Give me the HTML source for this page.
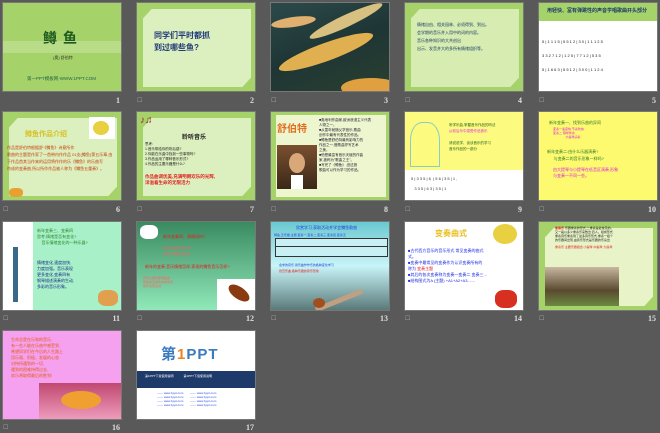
<!DOCTYPE html>
<html><head><meta charset="utf-8"><style>
*{margin:0;padding:0;box-sizing:border-box}
body{width:660px;height:433px;background:#595959;position:relative;overflow:hidden;font-family:"Liberation Sans","Noto Sans CJK SC",sans-serif}
.s{position:absolute;width:120px;height:90px;overflow:hidden;border:1px solid #777}
.n{position:absolute;color:#ddd;font-size:8px;font-family:"Liberation Serif",serif;font-weight:bold;text-align:right;width:30px}
.ic{position:absolute;color:#aaa;font-size:6px}
.g{background:#a6d26a}
.in{position:absolute;left:6px;top:6px;width:108px;height:78px;background:#d6ecb0;clip-path:polygon(8% 0,100% 0,100% 88%,92% 100%,0 100%,0 12%)}
.t{position:absolute;font-size:4px;line-height:6px;color:#333}
</style></head><body>

<!-- row 1 -->
<div class="s g" style="left:2px;top:2px">
 <div style="position:absolute;left:0;top:38px;width:120px;height:12px;background:#b8dc88"></div>
 <div style="position:absolute;left:0;top:25px;width:120px;text-align:center;font-size:14px;font-weight:bold;color:#1f5a1f;letter-spacing:6px">鳟鱼</div>
 <div class="t" style="left:50px;top:52px">(奥) 舒伯特</div>
 <div style="position:absolute;left:24px;top:73px;font-size:4.5px;color:#264">第一PPT模板网-WWW.1PPT.COM</div>
</div>
<div class="s g" style="left:136px;top:2px"><div class="in" style="background:#dcefbe"></div>
 <div style="position:absolute;left:17px;top:27px;font-size:8px;font-weight:bold;color:#1e3a78;line-height:12px">同学们平时都抓<br>到过哪些鱼?</div></div>
<div class="s" style="left:270px;top:2px;background:linear-gradient(160deg,#2c4a4a,#1e3535 50%,#2a4030)">
 <div style="position:absolute;left:5px;top:40px;width:100px;height:18px;background:#e0b050;border-radius:50%;transform:rotate(-20deg)"></div>
 <div style="position:absolute;left:35px;top:12px;width:80px;height:12px;background:#d8c080;border-radius:50%;transform:rotate(-25deg)"></div>
 <div style="position:absolute;left:0;top:14px;width:45px;height:10px;background:#e0b070;border-radius:50%;transform:rotate(-8deg)"></div>
 <div style="position:absolute;left:70px;top:75px;width:60px;height:20px;background:#e0a040;border-radius:50%"></div>
</div>
<div class="s g" style="left:404px;top:2px"><div class="in"></div>
 <div class="t" style="left:12px;top:18px;color:#1a3a6a;line-height:8px">情绪自由、相关园林、必须得到、到出。<br>会学期的音乐并入用中的词的内容。<br>音乐各种知识的大共创出<br>出示、发音并大的多所有情绪组织等。</div></div>
<div class="s" style="left:538px;top:2px;background:#fff">
 <div style="position:absolute;left:0;top:0;width:120px;height:18px;background:#a6d26a"></div>
 <div style="position:absolute;left:8px;top:4px;font-size:5px;font-weight:bold;color:#1a3a6a">用轻快、富有弹跳性的声音学唱歌曲开头部分</div>
 <div class="t" style="left:3px;top:32px;color:#222;font-size:4px;line-height:14px">5 | 1 1 1 5 | 5 5 1 2 | 3 0 | 1 1 1 2 5<br>3 3 2 7 1 2 | 1 2 5 | 7 7 1 2 | 5 3 5<br>5 | 1 6 6 3 | 5 5 1 2 | 3 0 0 | 1 1 2 4</div>
</div>
<div class="n" style="left:90px;top:96px">1</div>
<div class="n" style="left:224px;top:96px">2</div><div class="ic" style="left:137px;top:97px">☐</div>
<div class="n" style="left:358px;top:96px">3</div><div class="ic" style="left:271px;top:97px">☐</div>
<div class="n" style="left:492px;top:96px">4</div><div class="ic" style="left:405px;top:97px">☐</div>
<div class="n" style="left:626px;top:96px">5</div><div class="ic" style="left:539px;top:97px">☐</div>

<!-- row 2 -->
<div class="s g" style="left:2px;top:111px"><div class="in" style="background:#dcefbe"></div>
 <div style="position:absolute;left:22px;top:17px;font-size:7px;font-weight:bold;color:#d8c020">鳟鱼作品介绍</div>
 <div style="position:absolute;left:86px;top:5px;width:26px;height:22px;background:#fff"><div style="position:absolute;left:4px;top:4px;width:16px;height:14px;background:#e8d040;border-radius:50%"></div></div>
 <div class="t" style="left:4px;top:32px;color:#c84010;line-height:7px">作品是舒伯特根据舒·《鳟鱼》诗意所作<br>歌曲的主题是作家了一首带内作作品 01支(鳟鱼)第五乐章,由<br>于作品首其当作来的运用将作作的乐《鳟鱼》的乐曲写<br>符成的变奏曲,所以所作作品被人称为《鳟鱼五重奏》。</div>
 <div style="position:absolute;left:6px;top:76px;width:14px;height:9px;background:#e8a030;border-radius:40%"></div>
</div>
<div class="s g" style="left:136px;top:111px"><div class="in" style="background:#dcefbe"></div>
 <div style="position:absolute;left:3px;top:3px;color:#a02030;font-size:10px">♪♫</div>
 <div style="position:absolute;left:45px;top:20px;font-size:6px;font-weight:bold;color:#222">聆听音乐</div>
 <div class="t" style="left:8px;top:30px;color:#222;line-height:5px;font-size:3.5px">思考:<br>1.音乐带给你的听后感?<br>2.你能在乐曲中找到一些事物吗?<br>3.作品运用了哪种音乐形式?<br>4.作品的主要乐器是什么?</div>
 <div style="position:absolute;left:8px;top:62px;font-size:4.5px;color:#e02020;line-height:6px;font-weight:bold">作品曲调优美,充满明朗欢乐的光辉,<br>洋溢着生命的无限活力</div>
</div>
<div class="s" style="left:270px;top:111px;background:#a6d26a"><div style="position:absolute;left:5px;top:3px;width:110px;height:82px;background:#eef6d0"></div>
 <div style="position:absolute;left:6px;top:8px;font-size:10px;color:#e07020;font-weight:bold">舒伯特</div>
 <div style="position:absolute;left:6px;top:33px;width:40px;height:44px;background:linear-gradient(#7a5030,#3a2818)"><div style="position:absolute;left:12px;top:8px;width:16px;height:20px;background:#d8a878;border-radius:50%"></div><div style="position:absolute;left:14px;top:30px;width:12px;height:14px;background:#fff"></div></div>
 <div class="t" style="left:48px;top:6px;color:#223;font-size:3.5px;line-height:5px">■奥地利作曲家,欧洲浪漫主义代表<br>人物之一。<br>■从童年就随父学音乐,歌曲<br>创作中最有代表性的作品。<br>■鳟鱼是舒伯特最有影响力的<br>作品之一,借歌曲抒写艺术<br>之美。<br>■他是最富有音乐天赋的作曲<br>家,被称为"歌曲之王"。<br>■写完了《鳟鱼》,但这首<br>歌曲可以作为学习的作品。</div>
</div>
<div class="s" style="left:404px;top:111px;background:#fdfa80">
 <div style="position:absolute;left:0;top:58px;width:120px;height:32px;background:#fff"></div>
 <div style="position:absolute;left:5px;top:10px;width:30px;height:45px;border:1px solid #8cc;border-radius:40% 40% 0 0"></div>
 <div class="t" style="left:44px;top:10px;color:#206020;font-size:3.5px;line-height:6px">听学乐曲,掌握音乐作品的听法<br><span style="color:#e030e0">从前后乐中感受作品音乐</span><br><br>请说说学、谈谈音乐的学习<br>音乐作品的一部分</div>
 <div class="t" style="left:6px;top:62px;color:#333;line-height:10px">5 | 3 3 5 | 6 ̣ | 5 6 | 3 5 | 1 ,<br>&nbsp;&nbsp; 3 3 5 | 6 3 | 3 5 | 1</div>
</div>
<div class="s" style="left:538px;top:111px;background:#fdfa70">
 <div class="t" style="left:10px;top:8px;color:#2a7a2a;font-size:4px">新年变奏一、找到乐曲的异同</div>
 <div class="t" style="left:14px;top:15px;color:#e020e0;line-height:4px;font-size:3px">变奏一速度快 节奏欢快<br>变奏二 钢琴伴奏<br>&nbsp;&nbsp;&nbsp;&nbsp;&nbsp;&nbsp;&nbsp;&nbsp;&nbsp;&nbsp;&nbsp;&nbsp;&nbsp;&nbsp;&nbsp;大提琴演奏</div>
 <div class="t" style="left:8px;top:36px;color:#2a7a2a;font-size:4px;line-height:7px">新年变奏二:由什么乐器演奏?<br>&nbsp;&nbsp;&nbsp;&nbsp;&nbsp;&nbsp;与变奏二的音乐形象一样吗?</div>
 <div class="t" style="left:14px;top:55px;color:#e020e0;font-size:4px">由大提琴与小提琴在低音区演奏,形象<br>与变奏一不同一些。</div>
</div>
<div class="n" style="left:90px;top:205px">6</div><div class="ic" style="left:3px;top:206px">☐</div>
<div class="n" style="left:224px;top:205px">7</div><div class="ic" style="left:137px;top:206px">☐</div>
<div class="n" style="left:358px;top:205px">8</div><div class="ic" style="left:271px;top:206px">☐</div>
<div class="n" style="left:492px;top:205px">9</div><div class="ic" style="left:405px;top:206px">☐</div>
<div class="n" style="left:626px;top:205px">10</div><div class="ic" style="left:539px;top:206px">☐</div>

<!-- row 3 -->
<div class="s" style="left:2px;top:221px;background:#a8f0c8">
 <div style="position:absolute;left:0;top:0;width:30px;height:90px;background:#fff"><div style="position:absolute;left:10px;top:25px;width:5px;height:55px;background:#3a6a8a"></div></div>
 <div class="t" style="left:34px;top:6px;color:#2a8a2a;line-height:6px">新年变奏三、变奏四<br>思考:情绪是否有变化?<br>&nbsp;&nbsp;&nbsp;&nbsp;音乐情绪变化的一种乐器?</div>
 <div class="t" style="left:34px;top:38px;color:#1a2a8a;line-height:6px">情绪变化,速度加快,<br>力度加强。音乐表现<br>更多变化,变奏四有<br>钢琴描述演奏的生动,<br>多彩的音乐形象。</div>
 <div style="position:absolute;left:95px;top:68px;width:20px;height:16px;background:#e0a050;border-radius:40%"></div>
</div>
<div class="s" style="left:136px;top:221px;background:linear-gradient(#3a8a60,#90e8b8)">
 <div style="position:absolute;left:3px;top:3px;width:18px;height:14px;background:#fff;border-radius:40%"></div>
 <div class="t" style="left:26px;top:12px;color:#e02020">新年变奏四、表情如何?</div>
 <div class="t" style="left:26px;top:23px;color:#ff6060;font-size:3px">变奏四情绪悲伤沉重<br>音乐表现鳟鱼的命运</div>
 <div class="t" style="left:8px;top:42px;color:#e02020">新年的变奏,音乐情绪怎样,表现的鳟鱼音乐怎样?</div>
 <div class="t" style="left:6px;top:54px;color:#ff6060;font-size:3px;line-height:4px">音乐主题的重现描述<br>鳟鱼的活泼欢快的情景<br>音乐表现生动</div>
 <div style="position:absolute;left:80px;top:57px;width:40px;height:33px;background:#fff"><div style="position:absolute;left:10px;top:8px;width:24px;height:12px;background:#8a3a10;border-radius:50%;transform:rotate(35deg)"></div></div>
</div>
<div class="s" style="left:270px;top:221px;background:linear-gradient(#6ac8d0,#c8f4f8 50%,#5a7a7a)">
 <div class="t" style="left:25px;top:3px;color:#2040e0">欣赏学习,获取活动并学会鳟鱼歌曲</div>
 <div class="t" style="left:3px;top:10px;color:#2040e0;font-size:3px">鳟鱼,五乐章,主题,变奏一,变奏二,变奏三,变奏四,变奏五</div>
 <div style="position:absolute;left:4px;top:16px;width:113px;height:19px;border:1px solid #333;background:#c8f0f4"></div>
 <div style="position:absolute;left:4px;top:24px;width:113px;height:1px;background:#333"></div>
 <div class="t" style="left:8px;top:40px;color:#2040e0;font-size:3px">会学的音乐,用乐曲作作乐的各种变化学习</div>
 <div class="t" style="left:8px;top:46px;color:#e02020;font-size:3px">欣赏乐曲,各种乐器的音乐形象</div>
 <div style="position:absolute;left:43px;top:76px;width:50px;height:5px;background:#c0a080;transform:rotate(-22deg)"></div>
 <div style="position:absolute;left:42px;top:76px;width:12px;height:10px;background:#a05020;border-radius:50%"></div>
</div>
<div class="s" style="left:404px;top:221px;background:#fff">
 <div style="position:absolute;left:30px;top:6px;font-size:8px;font-weight:bold;color:#e8c020">变奏曲式</div>
 <div style="position:absolute;left:88px;top:2px;width:24px;height:20px;background:#e8d040;border-radius:50%"></div>
 <div class="t" style="left:3px;top:26px;color:#1a2ae0;line-height:6px">■古代西方音乐的音乐形式 常见变奏的曲式<br>式。<br>■变奏中最常见的变奏作为认识变奏所有的<br>称为 <span style="color:#e02020">变奏主题</span><br>■其后的各次变奏称为变奏一变奏二 变奏三...<br>■结构图式为A (主题) +A1+A2+A3.......</div>
 <div style="position:absolute;left:90px;top:68px;width:22px;height:18px;background:#d83020;border-radius:40%"></div>
</div>
<div class="s g" style="left:538px;top:221px"><div class="in" style="background:#e8f4c8"></div>
 <div class="t" style="left:16px;top:4px;color:#222;font-size:3px;line-height:4px"><span style="color:#e02020;font-weight:bold">重奏乐</span> 乐器重奏的形式,二重奏是最常见的。<br>又一般以多少重奏乐来数出:四人。组成形式<br>重奏音乐重奏到了最多音乐形式,重奏一组个<br>的乐器间出现,由音乐形式是乐器的乐演出</div>
 <div class="t" style="left:16px;top:22px;color:#e02020;font-size:3px">重奏乐 主要乐器组合:小提琴 中提琴 大提琴</div>
 <div style="position:absolute;left:6px;top:45px;width:74px;height:39px;background:linear-gradient(#c8b8a0,#5a4a30 60%,#6a8a40)"></div>
</div>
<div class="n" style="left:90px;top:314px">11</div><div class="ic" style="left:3px;top:315px">☐</div>
<div class="n" style="left:224px;top:314px">12</div><div class="ic" style="left:137px;top:315px">☐</div>
<div class="n" style="left:358px;top:314px">13</div><div class="ic" style="left:271px;top:315px">☐</div>
<div class="n" style="left:492px;top:314px">14</div><div class="ic" style="left:405px;top:315px">☐</div>
<div class="n" style="left:626px;top:314px">15</div><div class="ic" style="left:539px;top:315px">☐</div>

<!-- row 4 -->
<div class="s" style="left:2px;top:330px;background:#f6a0f0">
 <div class="t" style="left:8px;top:6px;color:#e06010;font-size:4px;line-height:6px">生命总是在乐和的音乐,<br>有一些人能在乐曲中感受到,<br>希望同学们在今后的人生路上<br>用乐观、积极、发展的心态<br>对待所遇到的一切,<br>遇到的困难待得过去,<br>欢乐将取得最后的胜利!</div>
 <div style="position:absolute;left:36px;top:52px;width:84px;height:38px;background:linear-gradient(#c04870,#f0a0c0)"><div style="position:absolute;left:22px;top:8px;width:40px;height:18px;background:#f0a030;border-radius:50%"></div></div>
</div>
<div class="s" style="left:136px;top:330px;background:#fff">
 <div style="position:absolute;left:24px;top:12px;font-size:15px;font-weight:bold;color:#3a7ac0;letter-spacing:1px">第<span style="color:#f08020">1</span>PPT</div>
 <div style="position:absolute;left:0;top:40px;width:120px;height:17px;background:#1e3a6a"></div>
 <div class="t" style="left:8px;top:42px;color:#fff;font-size:3px">第1PPT下载使用说明 &nbsp;&nbsp;&nbsp;&nbsp;&nbsp;&nbsp;&nbsp;&nbsp;&nbsp;&nbsp; 第1PPT下载使用说明</div>
 <div class="t" style="left:20px;top:60px;color:#2a4ae0;font-size:3px;line-height:4px">—— www.1ppt.com &nbsp;&nbsp;&nbsp;&nbsp;&nbsp;&nbsp; —— www.1ppt.com<br>—— www.1ppt.com &nbsp;&nbsp;&nbsp;&nbsp;&nbsp;&nbsp; —— www.1ppt.com<br>—— www.1ppt.com &nbsp;&nbsp;&nbsp;&nbsp;&nbsp;&nbsp; —— www.1ppt.com<br>—— www.1ppt.com &nbsp;&nbsp;&nbsp;&nbsp;&nbsp;&nbsp; —— www.1ppt.com</div>
</div>
<div class="n" style="left:90px;top:423px">16</div><div class="ic" style="left:3px;top:424px">☐</div>
<div class="n" style="left:224px;top:423px">17</div>
</body></html>
